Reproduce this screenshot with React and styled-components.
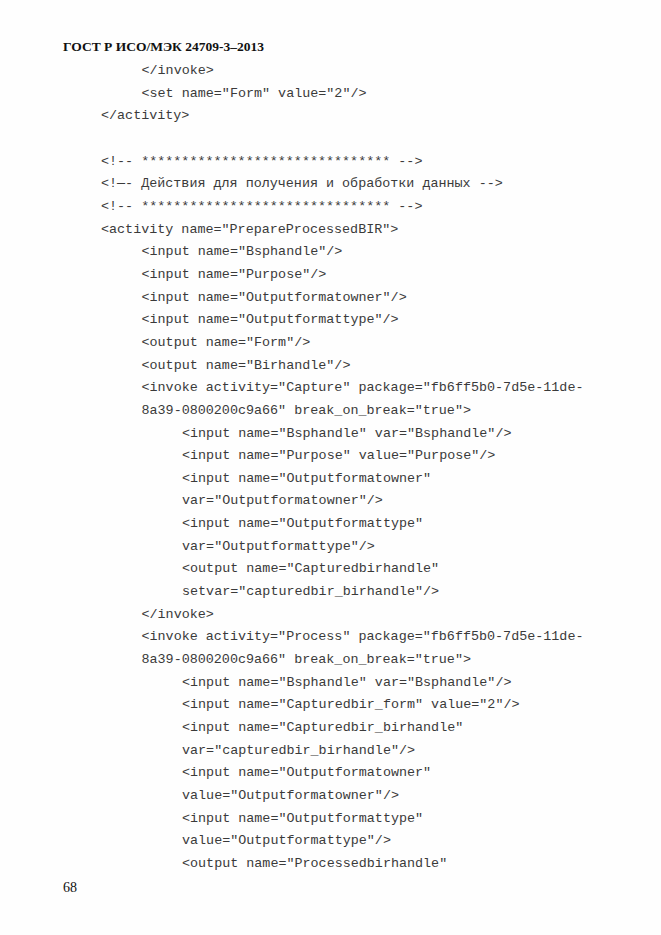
import styled, { createGlobalStyle } from "styled-components";

const GlobalStyle = createGlobalStyle`
    html, body {
        margin: 0;
        padding: 0;
        background: #ffffff;
    }
`;

const Page = styled.div`
    width: 661px;
    height: 935px;
    box-sizing: border-box;
    padding: 37px 0 0 63px;
    display: flex;
    flex-direction: column;
    background: #fefefe;
`;

const Header = styled.div`
    font-family: "Liberation Serif", "Times New Roman", serif;
    font-weight: bold;
    font-size: 13.5px;
    line-height: 20px;
    color: #111;
`;

const Code = styled.div`
    margin-top: 3px;
    padding-left: 38px;
    font-family: "Liberation Mono", "Courier New", monospace;
    font-size: 13.4px;
    line-height: 22.67px;
    color: #3a3a3a;
`;

const Line = styled.div`
    white-space: pre;
    height: 22.67px;
    padding-left: ${(p) => p.$indent * 40.5}px;
`;

const PageNumber = styled.div`
    margin-top: 2px;
    font-family: "Liberation Serif", "Times New Roman", serif;
    font-size: 14px;
    line-height: 20px;
    color: #111;
`;

const stars = "*".repeat(31);

const lines = [
    [1, "</invoke>"],
    [1, '<set name="Form" value="2"/>'],
    [0, "</activity>"],
    [0, ""],
    [0, `<!-- ${stars} -->`],
    [0, "<!—- Действия для получения и обработки данных -->"],
    [0, `<!-- ${stars} -->`],
    [0, '<activity name="PrepareProcessedBIR">'],
    [1, '<input name="Bsphandle"/>'],
    [1, '<input name="Purpose"/>'],
    [1, '<input name="Outputformatowner"/>'],
    [1, '<input name="Outputformattype"/>'],
    [1, '<output name="Form"/>'],
    [1, '<output name="Birhandle"/>'],
    [1, '<invoke activity="Capture" package="fb6ff5b0-7d5e-11de-'],
    [1, '8a39-0800200c9a66" break_on_break="true">'],
    [2, '<input name="Bsphandle" var="Bsphandle"/>'],
    [2, '<input name="Purpose" value="Purpose"/>'],
    [2, '<input name="Outputformatowner"'],
    [2, 'var="Outputformatowner"/>'],
    [2, '<input name="Outputformattype"'],
    [2, 'var="Outputformattype"/>'],
    [2, '<output name="Capturedbirhandle"'],
    [2, 'setvar="capturedbir_birhandle"/>'],
    [1, "</invoke>"],
    [1, '<invoke activity="Process" package="fb6ff5b0-7d5e-11de-'],
    [1, '8a39-0800200c9a66" break_on_break="true">'],
    [2, '<input name="Bsphandle" var="Bsphandle"/>'],
    [2, '<input name="Capturedbir_form" value="2"/>'],
    [2, '<input name="Capturedbir_birhandle"'],
    [2, 'var="capturedbir_birhandle"/>'],
    [2, '<input name="Outputformatowner"'],
    [2, 'value="Outputformatowner"/>'],
    [2, '<input name="Outputformattype"'],
    [2, 'value="Outputformattype"/>'],
    [2, '<output name="Processedbirhandle"'],
];

export default function App() {
    return (
        <>
            <GlobalStyle />
            <Page>
                <Header>ГОСТ Р ИСО/МЭК 24709-3–2013</Header>
                <Code>
                    {lines.map(([indent, text], i) => (
                        <Line key={i} $indent={indent}>{text}</Line>
                    ))}
                </Code>
                <PageNumber>68</PageNumber>
            </Page>
        </>
    );
}
